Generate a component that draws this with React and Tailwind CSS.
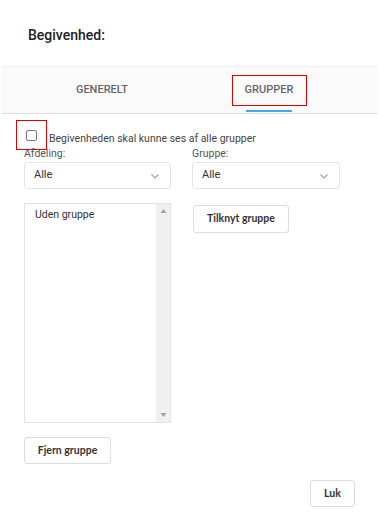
import React, { useState } from "react";

const Chevron = () => (
  <svg className="h-3 w-3 text-gray-400" viewBox="0 0 12 12" fill="none" stroke="currentColor" strokeWidth={1.2}>
    <path d="M2.5 4.5l3.5 3.5 3.5-3.5" />
  </svg>
);

const Select = ({ className }) => (
  <div
    className={`flex h-[27px] items-center justify-between rounded-[3px] border border-[#e4e4e4] bg-white pl-[9px] pr-[9px] text-[11px] text-[#333] ${className}`}
  >
    <span>Alle</span>
    <Chevron />
  </div>
);

const App = () => {
  const [all, setAll] = useState(false);

  return (
    <div className="h-[525px] w-[378px] bg-white font-['Roboto',sans-serif] text-[#333]">
      {/* Title */}
      <div className="h-[66px] pl-[28px] pt-[25px] text-[14px] font-medium text-[#222]">Begivenhed:</div>

      {/* Tabs */}
      <div className="ml-[2px] mr-[1px] flex h-[48px] border-t border-b border-t-[#f0f0f0] border-b-[#dcdcdc] bg-[#fafafa] text-[11px] font-medium text-[#666]">
        <div className="flex w-[200px] items-center justify-center">GENERELT</div>
        <div className="relative flex w-[134px] items-center justify-center">
          <div className="flex h-[31px] w-[75px] items-center justify-center border-[1.5px] border-[#e00000]">
            GRUPPER
          </div>
          <div className="absolute bottom-[1px] left-[44px] h-[2px] w-[46px] bg-[#42a5f5]" />
        </div>
      </div>

      {/* Checkbox row */}
      <div className="flex h-[30px] pl-[16px] mt-[6px]">
        <div className="flex h-[30px] w-[31px] items-center justify-center border-[1.5px] border-[#e00000]">
          <button
            onClick={() => setAll(!all)}
            className={`h-[11px] w-[11px] rounded-[2px] border border-[#777] ${all ? "bg-[#42a5f5]" : "bg-white"}`}
          />
        </div>
        <span className="mb-[5px] ml-[2px] self-end text-[10.5px] leading-[12px] text-[#444]">
          Begivenheden skal kunne ses af alle grupper
        </span>
      </div>

      {/* Selects */}
      <div className="-mt-[2px] flex gap-[21px] px-[24px]">
        <div className="w-[147px]">
          <div className="text-[10.5px] leading-[12px] text-[#555]">Afdeling:</div>
          <Select className="mt-[2px]" />
        </div>
        <div className="w-[148px]">
          <div className="text-[10.5px] leading-[12px] text-[#555]">Gruppe:</div>
          <Select className="mt-[2px]" />
        </div>
      </div>

      {/* List + attach */}
      <div className="mt-[14px] flex gap-[22px] px-[24px]">
        <div className="flex h-[220px] w-[147px] border border-[#e4e4e4]">
          <div className="flex-1 pl-[10px] pt-[4px] text-[10.5px] leading-[14px] text-[#333]">Uden gruppe</div>
          <div className="flex w-[14px] flex-col items-center justify-between bg-[#f0f0f0] py-[4px]">
            <svg className="h-[6px] w-[7px]" viewBox="0 0 7 6">
              <path d="M3.5 1L6.5 5H0.5z" fill="#a3a3a3" />
            </svg>
            <svg className="h-[6px] w-[7px]" viewBox="0 0 7 6">
              <path d="M3.5 5L6.5 1H0.5z" fill="#a3a3a3" />
            </svg>
          </div>
        </div>
        <div>
          <button className="mt-[2px] h-[28px] w-[96px] rounded-[3px] border border-[#dcdcdc] bg-white font-['Lato',sans-serif] text-[10.5px] font-bold text-[#333]">
            Tilknyt gruppe
          </button>
        </div>
      </div>

      {/* Remove */}
      <div className="mt-[14px] px-[24px]">
        <button className="h-[27px] w-[87px] rounded-[3px] border border-[#dcdcdc] bg-white font-['Lato',sans-serif] text-[10.5px] font-bold text-[#333]">
          Fjern gruppe
        </button>
      </div>

      {/* Footer */}
      <div className="mt-[16px] flex justify-end pr-[23px]">
        <button className="h-[27px] w-[45px] rounded-[3px] border border-[#dcdcdc] bg-white font-['Lato',sans-serif] text-[10.5px] font-bold text-[#333]">
          Luk
        </button>
      </div>
    </div>
  );
};

export default App;
